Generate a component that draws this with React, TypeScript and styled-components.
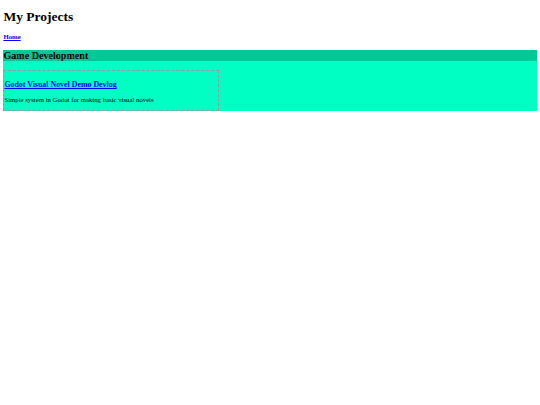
import styled, { createGlobalStyle } from "styled-components";

const GlobalStyle = createGlobalStyle`
	body {
		margin: 3.4px;
		font-family: "Liberation Serif", "Times New Roman", serif;
		background: white;
		color: black;
	}
`;

const Title = styled.h1`
	font-size: 13.5px;
	font-weight: bold;
	margin: 6px 0 8px;
`;

const Nav = styled.nav`
	font-size: 6.75px;
	font-weight: bold;
	margin-bottom: 10px;
	a {
		color: #0000ee;
	}
`;

const Category = styled.section`
	background-color: #00ffc3;
`;

const CategoryTitle = styled.h2`
	margin: 0;
	font-size: 10.1px;
	font-weight: bold;
	background-color: #00c896;
	line-height: 11px;
`;

const Grid = styled.div`
	display: grid;
	grid-template-columns: 216px;
	padding-top: 9px;
`;

const Card = styled.div`
	border: 1px dashed #999;
	h3 {
		font-size: 7.9px;
		margin: 9px 0 7px;
		a {
			color: #0000ee;
		}
	}
	p {
		font-size: 6.75px;
		margin: 6.5px 0 6.5px;
	}
`;

function App() {
	return (
		<>
			<GlobalStyle />
			<Title>My Projects</Title>
			<Nav>
				<a href="#">Home</a>
			</Nav>
			<Category>
				<CategoryTitle>Game Development</CategoryTitle>
				<Grid>
					<Card>
						<h3>
							<a href="#">Godot Visual Novel Demo Devlog</a>
						</h3>
						<p>Simple system in Godot for making basic visual novels</p>
					</Card>
				</Grid>
			</Category>
		</>
	);
}

export default App;
